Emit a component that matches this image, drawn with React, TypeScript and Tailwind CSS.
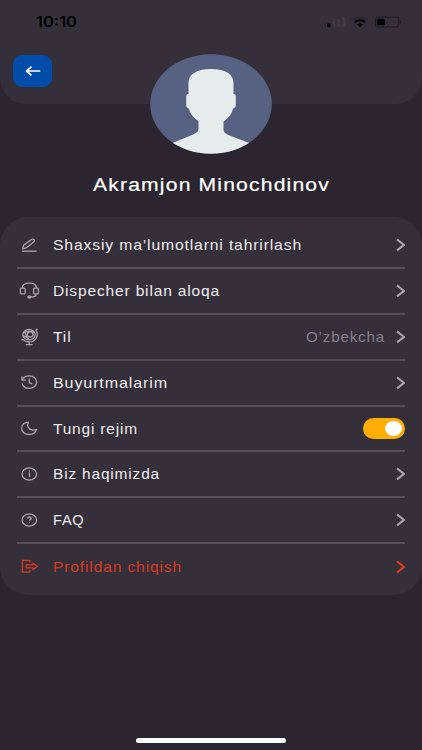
import { useState } from "react";
import type { ReactNode } from "react";

type Item = {
  label: string;
  icon: ReactNode;
  value?: string;
  toggle?: boolean;
  danger?: boolean;
  width: string;
};

const items: Item[] = [
  {
    label: "Shaxsiy ma’lumotlarni tahrirlash",
    width: "249",
    icon: (
      <>
        <path d="M5 18.200h14.500" />
        <path d="M5.700 15.800l.9-3.600 7.700-5.600c.9-.7 2-.6 2.800.1.8.8.5 1.700-.4 2.300l-7.700 5.900z" />
      </>
    ),
  },
  {
    label: "Dispecher bilan aloqa",
    width: "167",
    icon: (
      <>
        <rect x="3.4" y="9.1" width="4.8" height="5.8" rx="1.2" />
        <rect x="16.6" y="9.1" width="4.8" height="5.8" rx="1.2" />
        <path d="M5.400 9.100C5.400 6.100 8.200 4.200 12.400 4.200s7 1.900 7 4.900" />
        <path d="M19.200 14.900c0 1.800-1.600 2.900-3.800 2.900h-2" />
        <ellipse cx="12.4" cy="18" rx="1.5" ry="1" fill="currentColor" />
      </>
    ),
  },
  {
    label: "Til",
    width: "18.5",
    value: "O’zbekcha",
    icon: (
      <>
        <ellipse cx="12" cy="9.7" rx="6.2" ry="5.2" />
        <ellipse cx="13.2" cy="9.4" rx="2.9" ry="2.5" />
        <path d="M6.300 8.200c2.500-1.900 7.200-2.600 10.600-.8M6.200 11.200c1.500 0 2.800.4 3.300 1.400M8.800 6.200c-.8 2 .2 6.500 3.600 8.300" />
        <path d="M20.400 3.600l-1.500 1.700c3.200 4.200.4 11.600-6.700 11.600-2.500 0-4.800-.8-6.400-2.500l-1.400 1" />
        <path d="M12.200 17v2.400M8.800 19.600h6.800" />
      </>
    ),
  },
  {
    label: "Buyurtmalarim",
    width: "115",
    icon: (
      <>
        <path d="M5.200 8.900c1.200-2.400 4-4 7.200-4 4.100 0 7.300 2.700 7.300 6.200s-3.200 6.300-7.300 6.300c-3.600 0-6.600-2.100-7.200-5" />
        <path d="M5 5.400v3.700h4" />
        <path d="M12.200 7.600v4l3.200 1.500" />
      </>
    ),
  },
  {
    label: "Tungi rejim",
    width: "85",
    toggle: true,
    icon: (
      <path d="M11.500 5.100C7.600 5.100 4.600 7.700 4.600 11.200c0 3.600 3.300 6.300 7.500 6.300 3.900 0 6.700-2 7.500-5.100-1.200.6-2.500.8-3.900.6-4.400-.6-6.500-4.300-4.200-7.900z" />
    ),
  },
  {
    label: "Biz haqimizda",
    width: "107",
    icon: (
      <>
        <ellipse cx="12.3" cy="12" rx="7.3" ry="6.1" />
        <path d="M11.700 11.100h.8v3.800M12.400 8.600v.9" />
      </>
    ),
  },
  {
    label: "FAQ",
    width: "31.5",
    icon: (
      <>
        <ellipse cx="12.3" cy="12" rx="7.3" ry="6.1" />
        <path d="M10.500 10.500c0-2 3.700-2 3.700 0 0 1.300-1.800 1-1.800 2.300M12.400 14.300v.8" />
      </>
    ),
  },
  {
    label: "Profildan chiqish",
    width: "129",
    danger: true,
    icon: (
      <>
        <path d="M12.800 7.400V5.400H5.400v11.800h7.400v-2" />
        <path d="M9.200 9.900h6.600V8.200l4.600 3.200-4.600 3.200v-1.800H9.200z" />
      </>
    ),
  },
];

// Expanded lettering: glyphs are widened to fill the given width.
function WideText({ text, width, className }: { text: string; width: string; className: string }) {
  return (
    <svg width={width} height="24" className={`block shrink-0 overflow-visible fill-current ${className}`}>
      <text x="0" y="17.4" textLength={width} lengthAdjust="spacingAndGlyphs">
        {text}
      </text>
    </svg>
  );
}

function Chevron() {
  return (
    <svg width="10" height="14" viewBox="0 0 10 14" fill="none" stroke="currentColor" strokeWidth="2" className="shrink-0">
      <path d="M2 1.400L9 6.900 2 12.400" />
    </svg>
  );
}

function StatusBar() {
  return (
    <div className="flex h-11 items-center justify-between pl-9 pr-[19px] text-black">
      <WideText text="10:10" width="41" className="font-['Inter',sans-serif] text-[14px] font-semibold" />
      <svg width="78" height="16" viewBox="0 0 78 16">
        <rect x="2" y="9.5" width="3.5" height="3.5" rx="1" fill="#000" />
        <rect x="7.4" y="7.5" width="3" height="5.5" rx="1" fill="#413a46" />
        <rect x="12.4" y="5" width="3" height="8" rx="1" fill="#413a46" />
        <rect x="17.4" y="2.8" width="3" height="10.2" rx="1" fill="#413a46" />
        <path d="M27.500 6c4-3.700 11-3.700 15 0" fill="none" stroke="#28222c" strokeWidth="1.600" />
        <path d="M29.800 8.200c3-2.700 7.400-2.700 10.400 0" fill="none" stroke="#000" strokeWidth="1.900" />
        <path d="M32.100 10.500c1.800-1.600 4-1.600 5.800 0L35 13z" fill="#000" />
        <rect x="50.4" y="3" width="23.4" height="10" rx="2.6" fill="none" stroke="#1f1a22" />
        <rect x="52" y="4.7" width="8" height="6.6" rx="1.4" fill="#000" />
        <path d="M75.200 6.200c1.500.5 1.500 3.100 0 3.600z" fill="#1f1a22" />
      </svg>
    </div>
  );
}

function Avatar() {
  return (
    <svg width="122" height="100" viewBox="0 0 122 100" className="relative mx-auto -mt-[49.6px] block">
      <defs>
        <clipPath id="avatar">
          <ellipse cx="61" cy="50" rx="60.8" ry="49.8" />
        </clipPath>
      </defs>
      <g clipPath="url(#avatar)">
        <rect width="122" height="100" fill="#576182" />
        <path
          d="M38.500 40V29c0-8.500 7.500-14 22.500-14s22.500 5.500 22.500 14v11c2 0 2.600 1.500 2.300 4V51c0 2-1 3-2.800 3.500-.8 5-4 9-9.500 13v8c0 3 2 4.500 6 6L102 90v12H20V90l22-9c4.500-2 6.500-3.300 6.500-6v-8C43 63.500 40 59.500 39 54.500c-2-.5-2.800-1.500-2.800-3.500v-7.500c0-2.500.5-3.500 2.300-3.500z"
          fill="#e6ecec"
        />
      </g>
    </svg>
  );
}

function MenuRow({ item }: { item: Item }) {
  const [on, setOn] = useState(true);

  return (
    <li
      className={`flex h-[45.8px] items-center border-b-2 border-[#564f5b] last:border-b-0 ${
        item.danger ? "text-[#d93a20]" : "text-[#aaa3b0]"
      }`}
    >
      <svg width="24" height="24" viewBox="0 0 24 24" fill="none" stroke="currentColor" strokeWidth="1.3" strokeLinejoin="round" className="mr-3 shrink-0">
        {item.icon}
      </svg>
      <WideText
        text={item.label}
        width={item.width}
        className={`text-[15px] tracking-[0.8px] ${item.danger ? "" : "text-[#eeecf0]"}`}
      />
      <div className="ml-auto flex items-center gap-[10px]">
        {item.value && <WideText text={item.value} width="79" className="text-[15px] tracking-[0.8px] text-[#86808c]" />}
        {item.toggle ? (
          <button
            type="button"
            aria-pressed={on}
            onClick={() => setOn(!on)}
            className={`flex h-[21px] w-[42px] items-center rounded-full px-[3px] ${
              on ? "justify-end bg-[#ffae05]" : "justify-start bg-[#605966]"
            }`}
          >
            <span className="h-[15px] w-[17px] rounded-[50%] bg-white" />
          </button>
        ) : (
          <Chevron />
        )}
      </div>
    </li>
  );
}

export default function App() {
  return (
    <div className="flex h-[750px] w-[422px] flex-col overflow-hidden bg-[#2a252e] font-['Liberation_Sans',Arial,sans-serif]">
      <header className="h-[104px] shrink-0 rounded-b-[26px] bg-[#352f39]">
        <StatusBar />
        <button type="button" className="ml-[13px] mt-[11px] flex h-8 w-[39px] items-center justify-center rounded-[9px] bg-[#024da9] text-white">
          <svg width="16" height="12" viewBox="0 0 16 12" fill="none" stroke="currentColor" strokeWidth="1.7" strokeLinecap="round" strokeLinejoin="round">
            <path d="M14.600 6H1.500M6 2.200L1.500 6 6 9.800" />
          </svg>
        </button>
      </header>

      <Avatar />

      <h1 className="mt-5 flex justify-center text-white">
        <WideText text="Akramjon Minochdinov" width="237" className="stroke-white stroke-[0.2px] text-[18px] tracking-[1px]" />
      </h1>

      <ul className="mt-[18.6px] h-[378px] shrink-0 rounded-[28px] bg-[#352f39] px-[17px] pt-[6.5px]">
        {items.map((item) => (
          <MenuRow key={item.label} item={item} />
        ))}
      </ul>

      <div className="mx-auto mb-[7px] mt-auto h-[5px] w-[150px] rounded-full bg-white" />
    </div>
  );
}
